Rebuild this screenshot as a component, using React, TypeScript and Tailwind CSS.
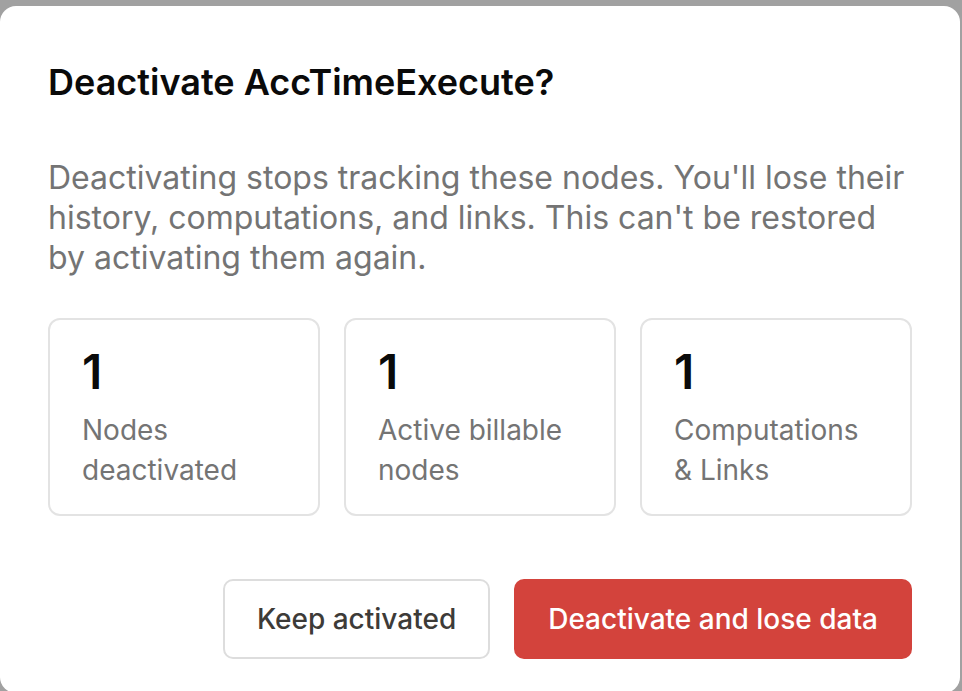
type Stat = {
  value: string
  label: string
}

const stats: Stat[] = [
  { value: '1', label: 'Nodes deactivated' },
  { value: '1', label: 'Active billable nodes' },
  { value: '1', label: 'Computations & Links' },
]

const StatCard = ({ value, label }: Stat) => {
  return (
    <div className="rounded-[12px] border-2 border-[#e3e3e3] px-[32px] pt-[24px] pb-[24px]">
      <div className="text-[48px] leading-[56px] font-semibold text-[#0a0a0a]">{value}</div>
      <div className="mt-[10px] text-[28px] leading-[40px] text-[#747474]">{label}</div>
    </div>
  )
}

const App = () => {
  return (
    <div
      className="h-[691px] w-full overflow-hidden bg-[#a1a1a1] pt-[6px]"
      style={{ fontFamily: 'Inter, "Noto Sans", sans-serif' }}
    >
      <div className="h-[687px] w-[960px] rounded-[16px] bg-white px-[48px] pt-[48px]">
        {/* Header */}
        <h1 className="text-[36px] leading-[56px] font-semibold text-[#0a0a0a]">
          Deactivate AccTimeExecute?
        </h1>
        <p className="mt-[48px] text-[32px] leading-[40px] text-[#747474]">
          Deactivating stops tracking these nodes. You'll lose their history, computations, and links. This can't be
          restored by activating them again.
        </p>

        {/* Stats */}
        <div className="mt-[40px] grid grid-cols-3 gap-[24px]">
          {stats.map((s) => (
            <StatCard key={s.label} value={s.value} label={s.label} />
          ))}
        </div>

        {/* Actions */}
        <div className="mt-[63px] flex justify-end gap-[24px]">
          <button className="h-[80px] rounded-[10px] border-2 border-[#dddddd] bg-white px-[32px] text-[28px] font-medium text-[#3d3b38]">
            Keep activated
          </button>
          <button className="h-[80px] rounded-[10px] bg-[#d3433c] px-[34px] text-[28px] font-medium text-white">
            Deactivate and lose data
          </button>
        </div>
      </div>
    </div>
  )
}

export default App
